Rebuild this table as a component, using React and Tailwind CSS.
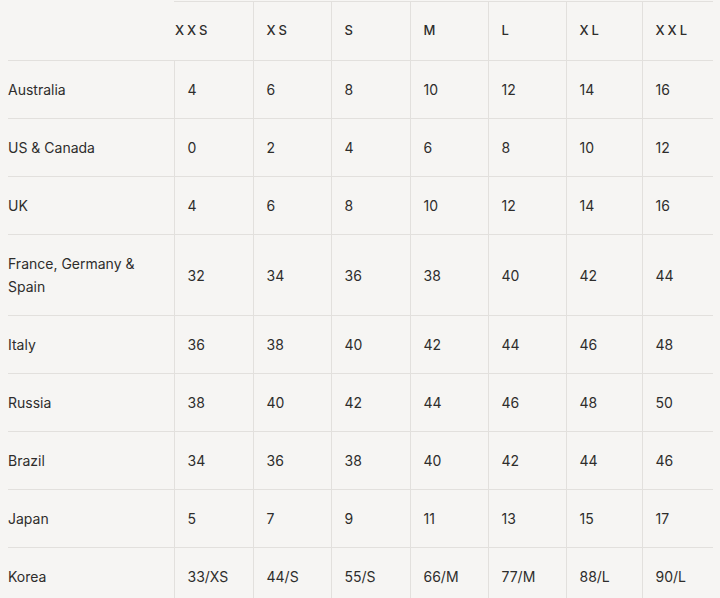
const SIZES = ['XXS', 'XS', 'S', 'M', 'L', 'XL', 'XXL']

const ROWS = [
  { country: 'Australia', values: ['4', '6', '8', '10', '12', '14', '16'] },
  { country: 'US & Canada', values: ['0', '2', '4', '6', '8', '10', '12'] },
  { country: 'UK', values: ['4', '6', '8', '10', '12', '14', '16'] },
  { country: 'France, Germany & Spain', values: ['32', '34', '36', '38', '40', '42', '44'], tall: true },
  { country: 'Italy', values: ['36', '38', '40', '42', '44', '46', '48'] },
  { country: 'Russia', values: ['38', '40', '42', '44', '46', '48', '50'] },
  { country: 'Brazil', values: ['34', '36', '38', '40', '42', '44', '46'] },
  { country: 'Japan', values: ['5', '7', '9', '11', '13', '15', '17'] },
  { country: 'Korea', values: ['33/XS', '44/S', '55/S', '66/M', '77/M', '88/L', '90/L'] },
]

const COL_WIDTHS = ['w-[79px]', 'w-[78px]', 'w-[79px]', 'w-[78px]', 'w-[78px]', 'w-[76px]', 'w-[71px]']

export default function App() {
  return (
    <div className="h-[598px] w-[720px] overflow-hidden bg-[#f6f5f3] pt-px font-['Inter',sans-serif] text-[#2e2d2c]">
      <table className="ml-2 w-[705px] table-fixed border-collapse">
        <colgroup>
          <col className="w-[166px]" />
          {COL_WIDTHS.map((w, i) => (
            <col key={i} className={w} />
          ))}
        </colgroup>
        <thead>
          <tr className="h-[59px]">
            <th className="p-0" />
            {SIZES.map((s, i) => (
              <th
                key={s}
                className={`border-t border-[#e2e0dd] p-0 text-left text-[13px] font-medium tracking-[3px] ${
                  i === 0 ? 'pl-px' : 'border-l pl-[13px]'
                }`}
              >
                {s}
              </th>
            ))}
          </tr>
        </thead>
        <tbody>
          {ROWS.map((r) => (
            <tr key={r.country} className={r.tall ? 'h-[81px]' : 'h-[58px]'}>
              <td className="border-t border-[#e2e0dd] p-0 pr-6 text-[14px] leading-[23px]">{r.country}</td>
              {r.values.map((v, i) => (
                <td key={i} className="border-l border-t border-[#e2e0dd] p-0 pl-[13px] text-[14px]">
                  {v}
                </td>
              ))}
            </tr>
          ))}
        </tbody>
      </table>
    </div>
  )
}
